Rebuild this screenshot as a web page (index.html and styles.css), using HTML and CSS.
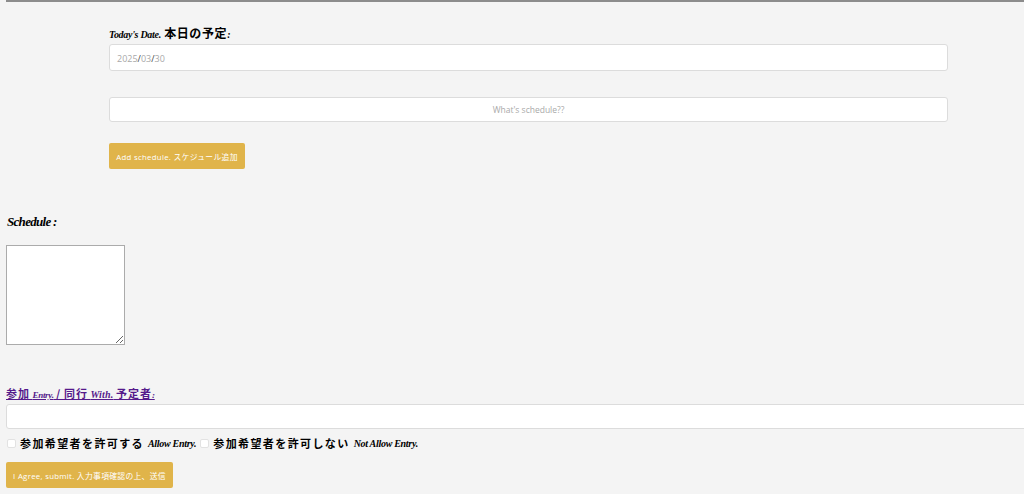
FILE: index.html
```html
<!DOCTYPE html>
<html>
<head>
<meta charset="UTF-8">
<title>Schedule</title>
<link rel="stylesheet" href="styles.css">
</head>
<body>
<hr class="top-line">

<form class="add-form">
    <label class="title-label"><i class="script">Today's Date.</i> 本日の予定<i class="script">:</i></label>
    <div class="field date-field"><span>2025</span><b>/</b><span>03</span><b>/</b><span>30</span></div>
    <input class="field what-field" type="text" placeholder="What's schedule??">
    <button class="btn add-btn" type="button">Add schedule. スケジュール追加</button>
</form>

<h2 class="schedule-title">Schedule :</h2>
<textarea class="schedule-box"></textarea>

<a class="entry-link" href="#">参加 <i class="script">Entry.</i> / 同行 <i class="script with-word">With.</i> 予定者<i class="script">:</i></a>
<input class="field entry-field" type="text">

<div class="allow-row">
    <label><input type="checkbox"> 参加希望者を許可する <i class="script">Allow Entry.</i></label>
    <label><input type="checkbox"> 参加希望者を許可しない <i class="script">Not Allow Entry.</i></label>
</div>

<button class="btn submit-btn" type="button">I Agree, submit. 入力事項確認の上、送信</button>
</body>
</html>
```

FILE: styles.css
```css
* {
	box-sizing: border-box;
	margin: 0;
	padding: 0;
}
html {
	overflow: hidden;
}
body {
	height: 494px;
	padding-left: 6px;
	overflow: hidden;
	background: #f4f4f4;
	color: #000;
	font-family: "Liberation Serif", "Noto Sans CJK JP", serif;
}
.script {
	font-family: "Liberation Serif", serif;
	font-style: italic;
	font-weight: bold;
	letter-spacing: -0.3px;
}
.top-line {
	height: 2px;
	border: 0;
	background: #8c8c8c;
}
.add-form {
	width: 839px;
	margin-left: 103px;
	padding-top: 24px;
}
.title-label {
	display: block;
	height: 18px;
	font-size: 12px;
	line-height: 14px;
	font-weight: bold;
	letter-spacing: 0.6px;
	font-family: "Noto Sans CJK JP", serif;
}
.title-label .script {
	font-size: 10px;
}
.field {
	display: block;
	width: 100%;
	background: #fff;
	border: 1px solid #dcdcdc;
	border-radius: 3px;
	font-family: "Open Sans", "Liberation Sans", sans-serif;
	font-size: 9px;
	outline: none;
}
.field::placeholder {
	color: #a9a9a9;
}
.date-field {
	height: 27px;
	padding-left: 7px;
	line-height: 27px;
	color: #a9a9a9;
}
.date-field b {
	font-weight: normal;
	color: #444;
}
.what-field {
	height: 25px;
	margin-top: 26px;
	font-size: 8.5px;
	text-align: center;
}
.btn {
	display: block;
	background: #e0b44a;
	border: 0;
	border-radius: 2px;
	color: #fff;
	font-family: "Open Sans", "Noto Sans CJK JP", sans-serif;
	font-size: 7.8px;
	letter-spacing: 0.3px;
}
.add-btn {
	width: 136px;
	height: 26px;
	margin-top: 21px;
}
.schedule-title {
	margin-top: 42px;
	margin-left: 1px;
	height: 24px;
	font-size: 13px;
	line-height: 22px;
	font-style: italic;
	font-weight: bold;
	letter-spacing: -0.7px;
}
.schedule-box {
	display: block;
	width: 119px;
	height: 100px;
	margin-top: 10px;
	background: #fff;
	border: 1px solid #ababab;
	outline: none;
}
.entry-link {
	display: block;
	margin-top: 40px;
	height: 19px;
	width: 150px;
	white-space: nowrap;
	color: #551a8b;
	font-family: "Noto Sans CJK JP", serif;
	font-size: 11px;
	line-height: 16px;
	font-weight: bold;
	letter-spacing: 1px;
	word-spacing: -1px;
}
.entry-link .script {
	font-size: 9px;
}
.entry-link .with-word {
	font-size: 10px;
	letter-spacing: 0.2px;
}
.entry-field {
	width: 1030px;
	height: 25px;
}
.allow-row {
	display: flex;
	gap: 4px;
	height: 15px;
	margin-top: 7px;
	margin-left: 1px;
	white-space: nowrap;
	font-family: "Noto Sans CJK JP", serif;
	font-size: 11px;
	line-height: 15px;
	font-weight: bold;
	letter-spacing: 1.4px;
}
.allow-row label {
	display: flex;
	align-items: center;
	gap: 4px;
}
.allow-row .script {
	font-size: 10px;
}
.allow-row input {
	appearance: none;
	width: 9px;
	height: 9px;
	background: #fff;
	border: 1px solid #e2e2e2;
	border-radius: 2px;
}
.submit-btn {
	width: 167px;
	height: 26px;
	margin-top: 11px;
}
```
